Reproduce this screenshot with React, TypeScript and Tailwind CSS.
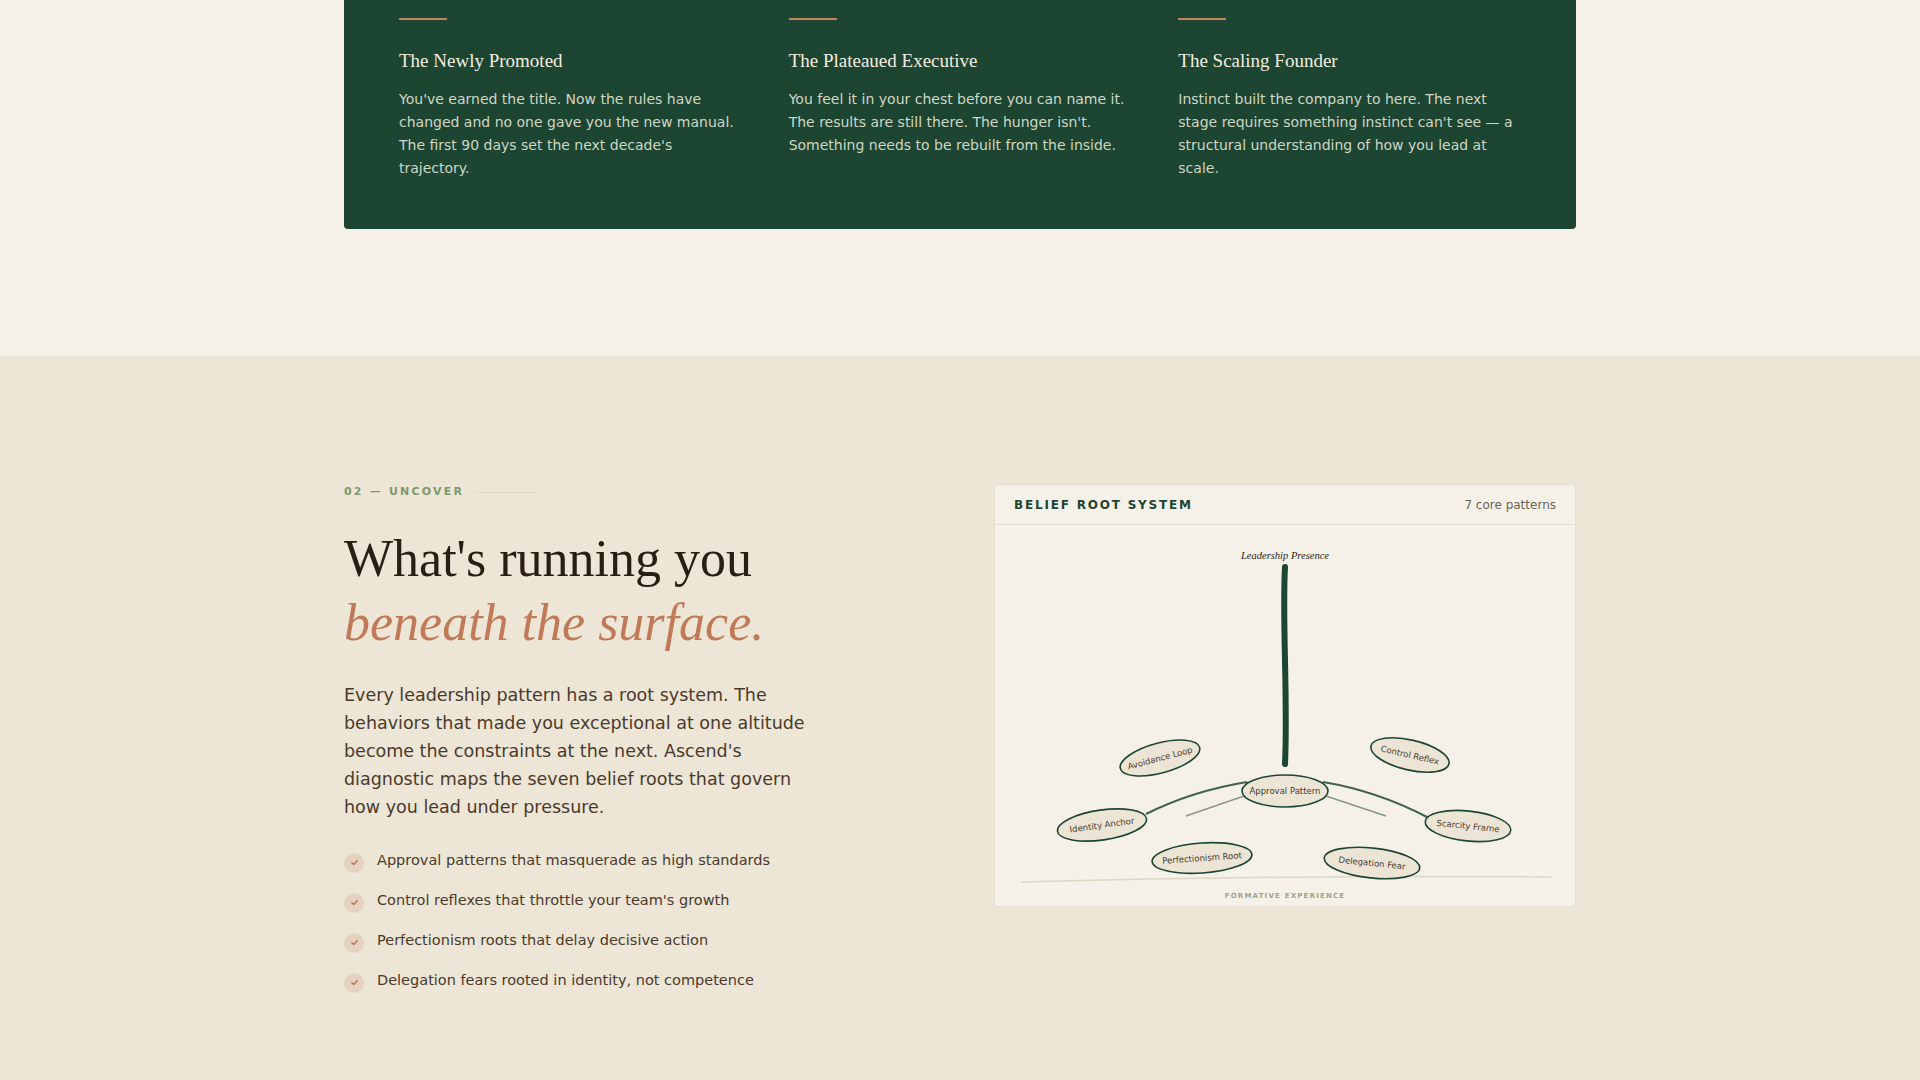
import React from "react";

const cols = [
  { t: "The Newly Promoted", d: "You've earned the title. Now the rules have changed and no one gave you the new manual. The first 90 days set the next decade's trajectory." },
  { t: "The Plateaued Executive", d: "You feel it in your chest before you can name it. The results are still there. The hunger isn't. Something needs to be rebuilt from the inside." },
  { t: "The Scaling Founder", d: "Instinct built the company to here. The next stage requires something instinct can't see — a structural understanding of how you lead at scale." },
];

const items = [
  "Approval patterns that masquerade as high standards",
  "Control reflexes that throttle your team's growth",
  "Perfectionism roots that delay decisive action",
  "Delegation fears rooted in identity, not competence",
];

const nodes = [
  { l: "Avoidance Loop", x: 1158, y: 759, r: -15, w: 41 },
  { l: "Control Reflex", x: 1408, y: 756, r: 13, w: 40 },
  { l: "Identity Anchor", x: 1100, y: 826, r: -8, w: 45 },
  { l: "Scarcity Frame", x: 1466, y: 827, r: 6, w: 43 },
  { l: "Perfectionism Root", x: 1200, y: 859, r: -4, w: 50 },
  { l: "Delegation Fear", x: 1370, y: 864, r: 6, w: 48 },
];

export default function App() {
  const sans = { fontFamily: '"DejaVu Sans", sans-serif' };
  const serif = { fontFamily: '"Liberation Serif", serif' };
  return (
    <div className="w-[1920px] min-h-[1080px] bg-[#ede5d5]" style={sans}>
      <div className="bg-[#f5f0e8] h-[356px] px-[344px]">
        <div className="bg-[#1c4532] rounded-b-[4px] h-[229px] pt-[18px] px-[55px] grid grid-cols-3 gap-[47px]">
          {cols.map((c) => (
            <div key={c.t}>
              <div className="w-[48px] h-[2px] bg-[#c08460]" />
              <div className="mt-[27px] text-[19px] text-[#f3ede0]" style={serif}>{c.t}</div>
              <p className="mt-[12px] text-[14px] leading-[23px] text-[#cfd6c4] max-w-[345px]">{c.d}</p>
            </div>
          ))}
        </div>
      </div>
      <div className="px-[344px] pt-[128px] flex justify-between">
        <div className="w-[470px]">
          <div className="flex items-center gap-3">
            <span className="text-[11px] font-bold tracking-[0.2em] text-[#7c9a6c]">02 — UNCOVER</span>
            <span className="w-[60px] h-px bg-[#e2d9c6]" />
          </div>
          <h2 className="mt-[26px] text-[52px] leading-[64px] text-[#2a1e14]" style={serif}>
            What's running you<br />
            <em className="text-[#c07a58]">beneath the surface.</em>
          </h2>
          <p className="mt-[26px] text-[17.5px] leading-[28px] text-[#4a3a2c]">
            Every leadership pattern has a root system. The behaviors that made you exceptional at one altitude become the constraints at the next. Ascend's diagnostic maps the seven belief roots that govern how you lead under pressure.
          </p>
          <ul className="mt-[30px] flex flex-col gap-[20px]">
            {items.map((t) => (
              <li key={t} className="flex items-center gap-[13px] text-[14.5px] text-[#4a3a2c] h-[20px]">
                <span className="w-[20px] h-[20px] rounded-full bg-[#e6d2c0] flex items-center justify-center mt-[4px] shrink-0">
                  <svg width="9" height="9" viewBox="0 0 10 10"><path d="M2 5.2l2 2 4-4.4" fill="none" stroke="#b9764f" strokeWidth="1.5" strokeLinecap="round" strokeLinejoin="round" /></svg>
                </span>
                {t}
              </li>
            ))}
          </ul>
        </div>
        <div className="w-[582px] h-[423px] bg-[#f5f1e8] rounded-[4px] border border-[#e6ded0] overflow-hidden">
          <div className="h-[40px] border-b border-[#e6ded0] flex items-center justify-between px-[19px]">
            <span className="text-[12px] font-bold tracking-[0.15em] text-[#1c4532]">BELIEF ROOT SYSTEM</span>
            <span className="text-[12px] text-[#6b6358]">7 core patterns</span>
          </div>
          <svg width="582" height="383" viewBox="993 526 582 383">
            <text x="1283" y="560" textAnchor="middle" fontSize="10.5" fontStyle="italic" fill="#2a1e14" style={serif}>Leadership Presence</text>
            <path d="M1283 568 C1280 620 1286 700 1283 765" stroke="#1c4532" strokeWidth="6" fill="none" strokeLinecap="round" />
            <path d="M1144 815 Q1190 792 1245 783" stroke="#3f6150" strokeWidth="2" fill="none" />
            <path d="M1321 783 Q1375 792 1425 818" stroke="#3f6150" strokeWidth="2" fill="none" />
            <path d="M1184 817 L1242 797" stroke="#8a958c" strokeWidth="1.5" fill="none" />
            <path d="M1324 797 L1384 817" stroke="#8a958c" strokeWidth="1.5" fill="none" />
            <path d="M1019 883 Q1280 876 1550 878" stroke="#dcd6c6" strokeWidth="1.5" fill="none" />
            <text x="1283" y="899" textAnchor="middle" fontSize="7" fontWeight="bold" letterSpacing="1.2" fill="#9aa38a">FORMATIVE EXPERIENCE</text>
            {nodes.map((n) => (
              <g key={n.l} transform={`rotate(${n.r} ${n.x} ${n.y})`}>
                <ellipse cx={n.x} cy={n.y} rx={n.w} ry="15" fill="#ece5d5" stroke="#1c4532" strokeWidth="1.6" />
                <text x={n.x} y={n.y + 3} textAnchor="middle" fontSize="8.5" fill="#4a3a2c">{n.l}</text>
              </g>
            ))}
            <ellipse cx="1283" cy="792" rx="43" ry="16" fill="#ece5d5" stroke="#1c4532" strokeWidth="1.6" />
            <text x="1283" y="795" textAnchor="middle" fontSize="8.5" fill="#4a3a2c">Approval Pattern</text>
          </svg>
        </div>
      </div>
      <div className="mx-[580px] mt-[140px] h-px bg-[#e4dccb]" />
    </div>
  );
}
